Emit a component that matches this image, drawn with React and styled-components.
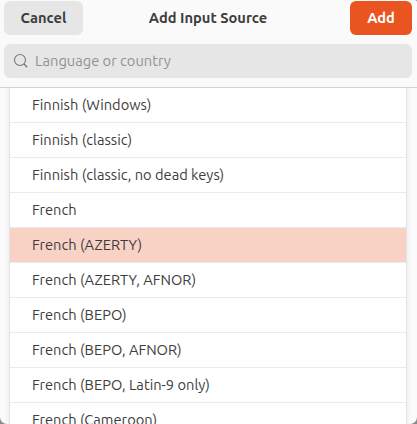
import React from "react";
import styled, { createGlobalStyle } from "styled-components";

const GlobalStyle = createGlobalStyle`
  * { box-sizing: border-box; }
  body {
    margin: 0;
    overflow: hidden;
    background: #8a8a8a;
    font-family: Ubuntu, "Noto Sans", sans-serif;
    font-size: 14.667px;
    color: #3d3d3d;
  }
`;

const Dialog = styled.main`
  display: flex;
  flex-direction: column;
  width: 417px;
  height: 424px;
  overflow: hidden;
  background: #fafafa;
  border-radius: 0 2px 7px 7px;
`;

const Header = styled.header`
  display: grid;
  grid-template-columns: 1fr auto 1fr;
  align-items: center;
  height: 36px;
  padding: 1px 5px 1px 4px;
`;

const Button = styled.button`
  width: ${(p) => (p.$primary ? "62px" : "79px")};
  height: 34px;
  padding: 0;
  border: 0;
  border-radius: 6px;
  justify-self: ${(p) => (p.$primary ? "end" : "start")};
  background: ${(p) => (p.$primary ? "#e95420" : "#e6e6e6")};
  color: ${(p) => (p.$primary ? "#fff" : "#3d3d3d")};
  font: inherit;
  font-weight: 700;
  line-height: 34px;
`;

const Title = styled.h1`
  margin: 0;
  font-size: inherit;
  font-weight: 700;
  line-height: 34px;
  white-space: nowrap;
`;

const SearchBar = styled.div`
  height: 52px;
  flex: none;
  padding: 8px 5px 0 4px;
  border-bottom: 1px solid #d2d2d2;
`;

const SearchField = styled.label`
  display: flex;
  align-items: center;
  height: 34px;
  padding-left: 9px;
  gap: 6px;
  border-radius: 6px;
  background: #e6e6e6;
  color: #929292;
  line-height: 34px;
`;

const ListArea = styled.section`
  flex: 1;
  min-height: 0;
  overflow: hidden;
  padding: 0 11px 0 10px;
`;

const List = styled.ul`
  margin: 0;
  padding: 0;
  list-style: none;
  background: #fff;
  box-shadow: 0 0 0 1px #e3e3e3, 0 0 5px 1px rgba(0, 0, 0, 0.08);
`;

const Row = styled.li`
  height: 35px;
  padding-left: 22px;
  border-bottom: 1px solid #ebebeb;
  background: ${(p) => (p.$selected ? "#f9d2c6" : "#fff")};
  line-height: 34px;
  white-space: nowrap;
`;

const sources = [
  "Finnish (Windows)",
  "Finnish (classic)",
  "Finnish (classic, no dead keys)",
  "French",
  "French (AZERTY)",
  "French (AZERTY, AFNOR)",
  "French (BEPO)",
  "French (BEPO, AFNOR)",
  "French (BEPO, Latin-9 only)",
  "French (Cameroon)",
];

export default function App() {
  return (
    <>
      <GlobalStyle />
      <Dialog>
        <Header>
          <Button>Cancel</Button>
          <Title>Add Input Source</Title>
          <Button $primary>Add</Button>
        </Header>
        <SearchBar>
          <SearchField>
            <svg width="16" height="16" viewBox="0 0 16 16" fill="none" stroke="#777" strokeWidth="1.1">
              <circle cx="7" cy="7" r="5.5" />
              <path d="M11 11l3.2 3.2" strokeWidth="1.4" />
            </svg>
            <span>Language or country</span>
          </SearchField>
        </SearchBar>
        <ListArea>
          <List>
            {sources.map((name) => (
              <Row key={name} $selected={name === "French (AZERTY)"}>
                {name}
              </Row>
            ))}
          </List>
        </ListArea>
      </Dialog>
    </>
  );
}
